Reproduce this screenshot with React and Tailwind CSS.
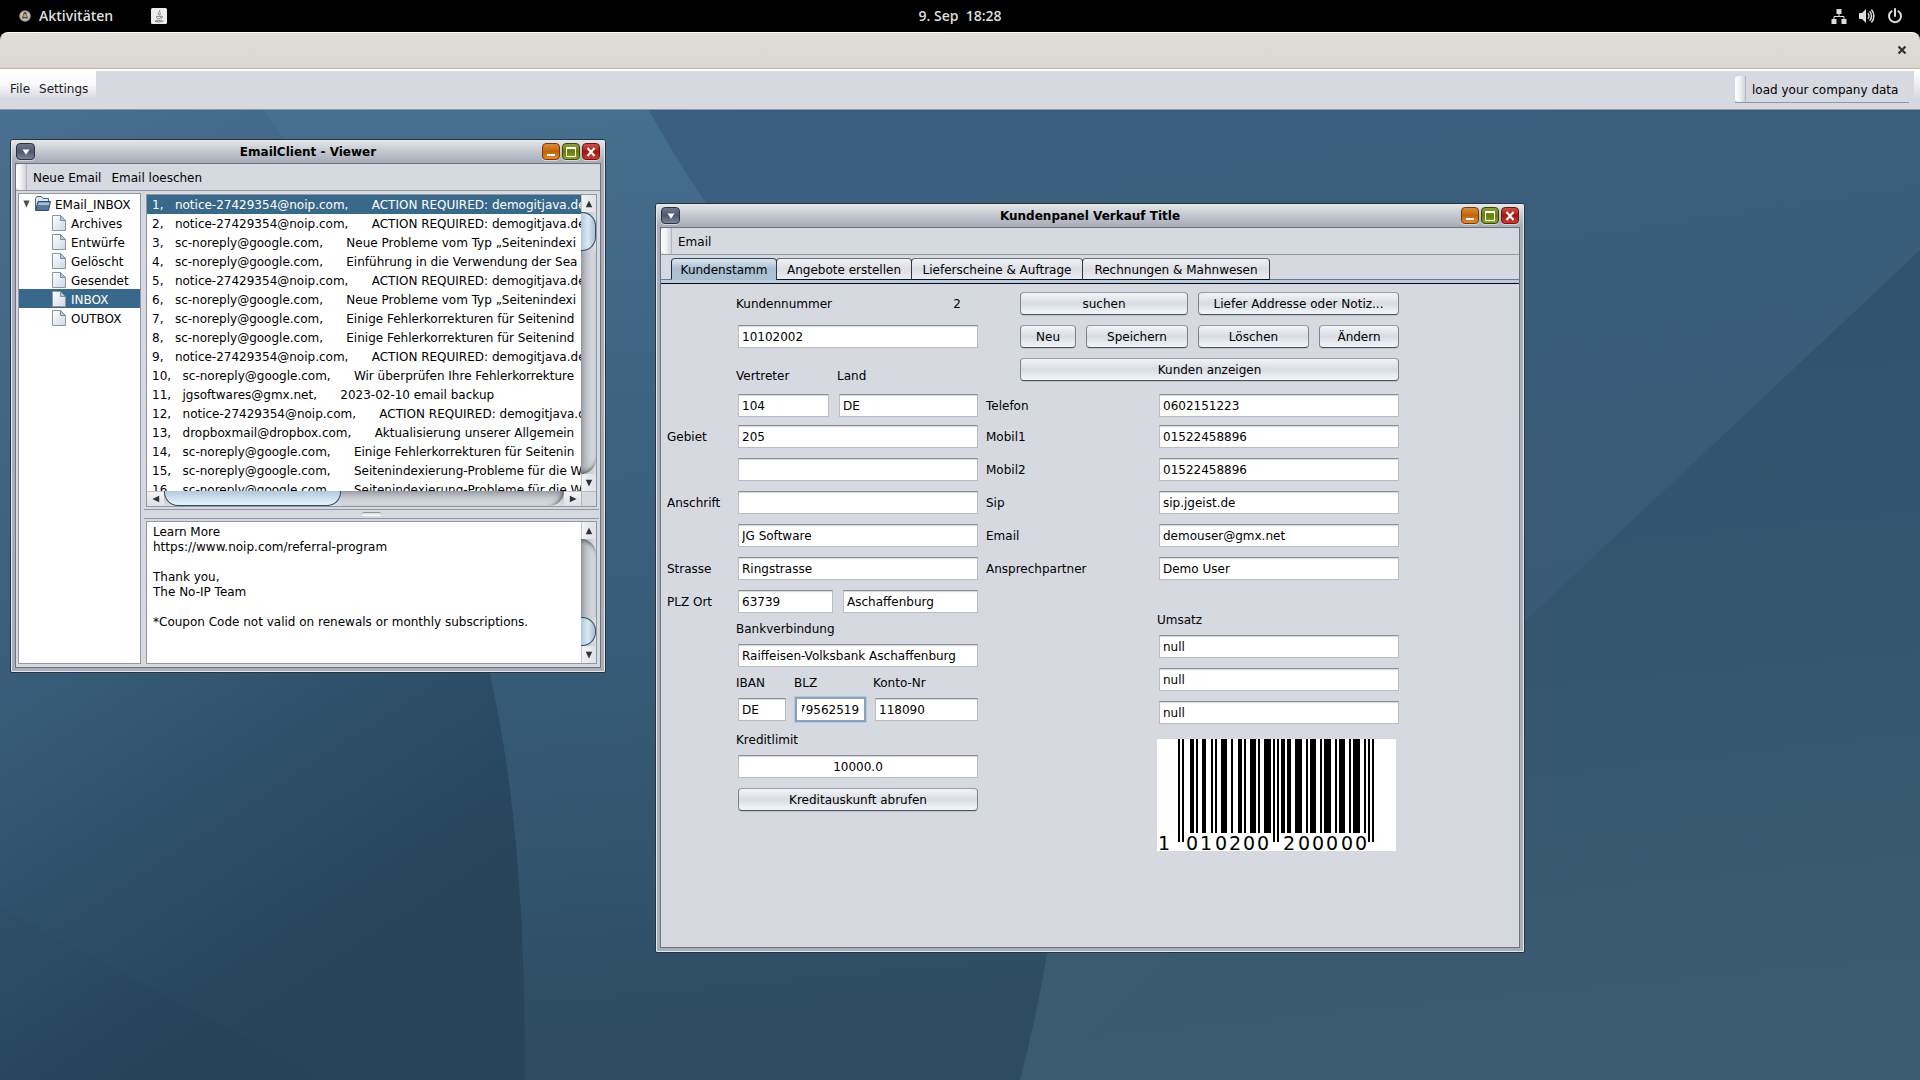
import { useEffect, useRef } from "react";

const SANS = "font-['DejaVu_Sans',sans-serif]";

/* ---------- wallpaper ---------- */

function Wallpaper() {
  return (
    <svg
      className="absolute inset-0 h-full w-full"
      viewBox="0 110 1920 970"
      preserveAspectRatio="none"
      aria-hidden="true"
    >
      <defs>
        <linearGradient id="wpRight" x1="0" y1="0" x2="0.3" y2="1">
          <stop offset="0" stopColor="#3c6083" />
          <stop offset="0.35" stopColor="#3a5d7a" />
          <stop offset="0.7" stopColor="#385a74" />
          <stop offset="1" stopColor="#3a5b71" />
        </linearGradient>
        <linearGradient id="wpMid" x1="0" y1="0" x2="0.1" y2="1">
          <stop offset="0" stopColor="#47708f" />
          <stop offset="0.5" stopColor="#3a5e7c" />
          <stop offset="0.8" stopColor="#33556e" />
          <stop offset="1" stopColor="#2d4c64" />
        </linearGradient>
        <linearGradient id="wpLeft" x1="0" y1="0" x2="0.35" y2="1">
          <stop offset="0" stopColor="#486f8f" />
          <stop offset="0.45" stopColor="#3c617e" />
          <stop offset="0.65" stopColor="#345670" />
          <stop offset="0.9" stopColor="#284760" />
          <stop offset="1" stopColor="#27445b" />
        </linearGradient>
        <linearGradient id="wpWedge" x1="0.8" y1="0" x2="0.9" y2="1">
          <stop offset="0" stopColor="#30526c" />
          <stop offset="0.5" stopColor="#33556e" stopOpacity="0.8" />
          <stop offset="1" stopColor="#38596f" stopOpacity="0" />
        </linearGradient>
      </defs>
      <rect x="0" y="110" width="1920" height="970" fill="url(#wpRight)" />
      <path d="M1920 250 L1524 622 L1200 926 L1040 1080 L1920 1080 Z" fill="url(#wpWedge)" />
      <path
        d="M0 110 H649 Q670 150 706 203 C960 500 1110 700 1047 954 Q1036 1020 1020 1080 H0 Z"
        fill="url(#wpMid)"
      />
      <path
        d="M0 110 H263 Q275 125 285 141 C380 330 450 510 490 675 Q526 830 525 1080 H0 Z"
        fill="url(#wpLeft)"
      />
      <path d="M0 908 L324 1080 H0 Z" fill="#1f3a50" opacity="0.06" />
    </svg>
  );
}

/* ---------- GNOME top bar ---------- */

function TopBar() {
  return (
    <header className="flex h-8 shrink-0 items-center bg-black font-['Open_Sans',sans-serif] text-sm font-semibold text-[#dedede]">
      <div className="grid w-full grid-cols-[1fr_auto_1fr] items-center">
        <div className="flex items-center gap-[38px] pl-[19px]">
          <button type="button" className="flex items-center gap-2">
            <svg viewBox="0 0 12 12" className="h-3 w-3" aria-hidden="true">
              <circle cx="6" cy="6" r="5.8" fill="#9b9b9b" />
              <circle cx="6" cy="6" r="4.6" fill="#c9c6c0" />
              <path d="M6 2 C4.4 2 4.2 3.2 4.3 4.6 C3.2 6 2.8 8 3.6 9.4 L8.4 9.4 C9.2 8 8.8 6 7.7 4.6 C7.8 3.2 7.6 2 6 2Z" fill="#4a4a4a" />
              <path d="M4.8 4.2 H7.2 L7.6 7 H4.4Z" fill="#e5a63c" />
              <path d="M3.6 8.4 H8.4 L8 9.8 H4Z" fill="#d8d8d8" />
            </svg>
            Aktivitäten
          </button>
          <button type="button" aria-label="Java" className="h-4 w-4">
            <svg viewBox="0 0 16 16" className="h-4 w-4" aria-hidden="true">
              <rect width="16" height="16" rx="1.5" fill="#ededed" />
              <path
                d="M8.8 2.2 C9.6 3.6 6.6 4.6 7.4 6.2 L8.4 7.4 M10 4.6 C8.4 5.4 9.4 6.4 8.8 7.4 M5.2 8.4 H10 C10.4 9.6 9.6 10.8 7.8 10.8 C6.4 10.8 5.6 10 5.4 9 M10.2 8.2 C12 7.8 12 9.8 10 10.2 M4.4 12.2 C6 12.8 9.6 12.8 11 12.2 M4 13.4 C6.4 14.2 10 14.2 12.4 13"
                fill="none"
                stroke="#777"
                strokeWidth="0.9"
              />
            </svg>
          </button>
        </div>
        <button type="button" className="whitespace-pre">9. Sep  18:28</button>
        <div className="flex items-center justify-end gap-3 pr-[17px]">
          <svg viewBox="0 0 16 16" className="h-4 w-4" aria-label="Netzwerk" role="img">
            <path d="M5.5 1h5v5h-5z M.5 11h5v5h-5z M10.500 11h5v5h-5z" fill="#dedede" />
            <path d="M8 6v2.500M3 11V8.500h10V11" fill="none" stroke="#dedede" />
          </svg>
          <svg viewBox="0 0 16 16" className="h-4 w-4" aria-label="Lautstärke" role="img">
            <path d="M0 5h3l4-4v14l-4-4H0z" fill="#dedede" />
            <path d="M8.800 5.200a4 4 0 0 1 0 5.600M10.600 3.200a7 7 0 0 1 0 9.600M12.400 1.400a10 10 0 0 1 0 13.200" fill="none" stroke="#dedede" strokeWidth="1.500" />
          </svg>
          <svg viewBox="0 0 16 16" className="h-4 w-4" aria-label="Ausschalten" role="img">
            <path d="M4.600 3.200a6 6 0 1 0 6.800 0M8 1v7" fill="none" stroke="#dedede" strokeWidth="2" strokeLinecap="round" />
          </svg>
        </div>
      </div>
    </header>
  );
}

/* ---------- application chrome ---------- */

function Grip() {
  return (
    <span className="w-[11px] self-stretch rounded-l-sm border-r border-[#b3b7c1] bg-linear-to-r from-white via-[#f1f2f3] to-[#d0d3d8]" />
  );
}

function AppHeader() {
  return (
    <>
      <div className="shrink-0 bg-black">
        <div className="flex h-[37px] items-center justify-end rounded-t-lg border-t border-b border-t-white border-b-[#bfb5ac] bg-linear-to-b from-[#e1ddda] to-[#dad6d1] pr-[13px] pb-px">
          <button type="button" aria-label="Schließen" className="h-[10px] w-[10px]">
            <svg viewBox="0 0 10 10" className="h-[10px] w-[10px]" aria-hidden="true">
              <path d="M1.500 1.500l7 7M8.500 1.500l-7 7" stroke="#2e3436" strokeWidth="2.200" />
            </svg>
          </button>
        </div>
      </div>
      <div className="flex h-[41px] shrink-0 items-start justify-between border-t-2 border-b border-t-white border-b-[#8f98a5] bg-[#d6d9e0] text-xs text-[#1c1c1c]">
        <nav className="flex h-[27px] w-24 items-end gap-[9px] bg-linear-to-b from-white via-[#f8f9fa] to-[#d8dbe2] pl-[10px]">
          <button type="button" className="h-[18px]">File</button>
          <button type="button" className="h-[18px]">Settings</button>
        </nav>
        <div className="flex">
          <div className="mt-[5px] flex h-[27px] items-center border-b border-[#9297a1]">
            <Grip />
            <button type="button" className="w-[163px] pt-px pl-[6px] text-left whitespace-nowrap text-black">load your company data</button>
          </div>
          <div className="ml-[5px] h-[27px] w-[6px] bg-linear-to-b from-white to-[#d8dbe2]" />
        </div>
      </div>
    </>
  );
}

/* ---------- internal frame ---------- */

function FrameButton({ tone, label, children }) {
  return (
    <button
      type="button"
      aria-label={label}
      className={`flex h-[17px] items-center justify-center rounded-[4px] border shadow-[0_1px_0_rgba(255,255,255,0.45)] ${tone}`}
    >
      {children}
    </button>
  );
}

function Frame({ title, place, menu, children }) {
  return (
    <section
      aria-label={title}
      className={`absolute flex flex-col rounded-t-[3px] rounded-b-[2px] border border-[#27333e] bg-[#a9aeb9] shadow-[inset_0_0_0_1px_#e4e6e9] ${place}`}
    >
      <header className="grid h-[23px] shrink-0 grid-cols-[1fr_auto_1fr] items-center rounded-t-[2px] border-x border-[#e4e6e9] bg-linear-to-b from-[#e6e7e9] via-[#c3c7cf] to-[#a6abb6] px-1">
        <FrameButton label="Menü" tone="w-[19px] border-[#2b3242] bg-linear-to-b from-[#70788b] via-[#4f586d] to-[#7b849a]">
          <svg viewBox="0 0 8 6" className="h-[6px] w-2" aria-hidden="true">
            <path d="M0.500 0.500h7L4 5.800z" fill="#fff" />
          </svg>
        </FrameButton>
        <h2 className="text-xs font-bold text-black">{title}</h2>
        <div className="flex justify-end gap-[2px]">
          <FrameButton label="Minimieren" tone="w-[18px] border-[#7f3608] bg-linear-to-b from-[#d58c3c] via-[#c06405] to-[#e08a2a]">
            <svg viewBox="0 0 12 12" className="h-3 w-3" aria-hidden="true">
              <rect x="2" y="8" width="8" height="2" fill="#fff" />
            </svg>
          </FrameButton>
          <FrameButton label="Maximieren" tone="w-[18px] border-[#3a4a06] bg-linear-to-b from-[#8c9f3e] via-[#667c06] to-[#8da52c]">
            <svg viewBox="0 0 12 12" className="h-3 w-3" aria-hidden="true">
              <path d="M1.500 2.500h9v8h-9z" fill="none" stroke="#fff" />
              <path d="M1 1h10v2H1z" fill="#fff" />
            </svg>
          </FrameButton>
          <FrameButton label="Schließen" tone="w-[18px] border-[#6e1212] bg-linear-to-b from-[#c5514a] via-[#a6160f] to-[#cb3a32]">
            <svg viewBox="0 0 12 12" className="h-3 w-3" aria-hidden="true">
              <path d="M2.500 2l7 8M9.500 2l-7 8" stroke="#fff" strokeWidth="2" />
            </svg>
          </FrameButton>
        </div>
      </header>
      <div className="mx-1 mb-1 flex min-h-0 flex-1 flex-col border border-[#6b7383] bg-[#d6d9e0] text-xs text-black">
        <nav className="flex h-[27px] shrink-0 items-center border-b border-[#9297a5]">
          <Grip />
          <div className="flex gap-[10px] pt-[2px] pl-[6px]">
            {menu.map((m) => (
              <button key={m} type="button" className="whitespace-nowrap">{m}</button>
            ))}
          </div>
        </nav>
        {children}
      </div>
    </section>
  );
}

/* ---------- scroll bars ---------- */

function Arrow({ dir }) {
  const d = {
    up: "M5 0.500L9 9H1z",
    down: "M1 1h8L5 9.500z",
    left: "M0.500 5L9 1v8z",
    right: "M1 1l8.500 4L1 9z",
  }[dir];
  return (
    <svg viewBox="0 0 10 10" className="h-2 w-2" aria-hidden="true">
      <path d={d} fill="#2f3237" />
    </svg>
  );
}

function VScroll({ before, thumb }) {
  return (
    <div className="flex w-[15px] shrink-0 flex-col bg-linear-to-r from-[#9ea1a8] via-[#c8cbd2] to-[#dcdee4]">
      <button type="button" aria-label="Nach oben" className="flex h-[17px] shrink-0 items-center justify-center border-l border-[#c3c6cc] bg-linear-to-r from-[#f2f3f4] to-[#dfe1e6]">
        <Arrow dir="up" />
      </button>
      <div className={`shrink-0 rounded-tr-[15px] shadow-[inset_0_4px_4px_-2px_#5b5e64] ${before}`} />
      <div className={`shrink-0 rounded-r-[14px] border border-l-0 border-[#344d65] bg-linear-to-r from-[#b2c6dc] via-[#dbe9f4] to-[#a9bfd2] ${thumb}`} />
      <div className="flex-1 rounded-br-[15px] shadow-[inset_0_-4px_4px_-2px_#5b5e64]" />
      <button type="button" aria-label="Nach unten" className="flex h-[17px] shrink-0 items-center justify-center border-l border-[#c3c6cc] bg-linear-to-r from-[#f2f3f4] to-[#dfe1e6]">
        <Arrow dir="down" />
      </button>
    </div>
  );
}

function HScroll() {
  return (
    <div className="flex h-[15px] shrink-0">
      <div className="flex min-w-0 flex-1 bg-linear-to-b from-[#9ea1a8] via-[#c8cbd2] to-[#dcdee4]">
        <button type="button" aria-label="Nach links" className="flex w-[17px] items-center justify-center border-t border-[#c3c6cc] bg-linear-to-b from-[#f2f3f4] to-[#dfe1e6]">
          <Arrow dir="left" />
        </button>
        <div className="w-[177px] rounded-b-[14px] border border-t-0 border-[#344d65] bg-linear-to-b from-[#b2c6dc] via-[#cfdfec] to-[#e6f4fd]" />
        <div className="flex-1 rounded-br-[15px] shadow-[inset_-4px_0_4px_-2px_#5b5e64]" />
        <button type="button" aria-label="Nach rechts" className="flex w-[17px] items-center justify-center border-t border-[#c3c6cc] bg-linear-to-b from-[#f2f3f4] to-[#dfe1e6]">
          <Arrow dir="right" />
        </button>
      </div>
      <div className="w-[15px] border-t border-l border-[#b4b8c0]" />
    </div>
  );
}

/* ---------- e-mail client ---------- */

const FOLDERS = ["Archives", "Entwürfe", "Gelöscht", "Gesendet", "INBOX", "OUTBOX"];

const NOIP = "notice-27429354@noip.com";
const GOOGLE = "sc-noreply@google.com";
const MAILS = [
  [NOIP, "ACTION REQUIRED: demogitjava.de"],
  [NOIP, "ACTION REQUIRED: demogitjava.de"],
  [GOOGLE, "Neue Probleme vom Typ „Seitenindexi"],
  [GOOGLE, "Einführung in die Verwendung der Sea"],
  [NOIP, "ACTION REQUIRED: demogitjava.de"],
  [GOOGLE, "Neue Probleme vom Typ „Seitenindexi"],
  [GOOGLE, "Einige Fehlerkorrekturen für Seitenind"],
  [GOOGLE, "Einige Fehlerkorrekturen für Seitenind"],
  [NOIP, "ACTION REQUIRED: demogitjava.de"],
  [GOOGLE, "Wir überprüfen Ihre Fehlerkorrekture"],
  ["jgsoftwares@gmx.net", "2023-02-10 email backup"],
  [NOIP, "ACTION REQUIRED: demogitjava.de"],
  ["dropboxmail@dropbox.com", "Aktualisierung unserer Allgemein"],
  [GOOGLE, "Einige Fehlerkorrekturen für Seitenin"],
  [GOOGLE, "Seitenindexierung-Probleme für die W"],
  [GOOGLE, "Seitenindexierung-Probleme für die W"],
];

const MESSAGE = `Learn More
https://www.noip.com/referral-program

Thank you,
The No-IP Team

*Coupon Code not valid on renewals or monthly subscriptions.`;

function FileIcon() {
  return (
    <svg viewBox="0 0 14 16" className="h-4 w-[14px]" aria-hidden="true">
      <defs>
        <linearGradient id="sheet" x1="0" y1="0" x2="1" y2="1">
          <stop offset="0" stopColor="#fff" />
          <stop offset="1" stopColor="#cfd9e6" />
        </linearGradient>
      </defs>
      <path d="M.5.5h8l5 5v10H.5z" fill="url(#sheet)" stroke="#8d95a1" />
      <path d="M8.500.5v5h5z" fill="#b4cadf" stroke="#7c8ca0" strokeLinejoin="round" />
    </svg>
  );
}

function FolderIcon() {
  return (
    <svg viewBox="0 0 16 15" className="h-[15px] w-4" aria-hidden="true">
      <path d="M.5 14V2.500L2 .5h4.500L8 2.500h5.500V6" fill="#dce6ef" stroke="#49627d" />
      <path d="M.7 14.500L3 5.500h12.500L13.500 14.500z" fill="#56799a" stroke="#304c68" />
      <path d="M3.600 6.500h10.800l-.5 2.500H3z" fill="#a9c1d6" />
    </svg>
  );
}

function EmailWindow() {
  return (
    <Frame title="EmailClient - Viewer" place="left-[10px] top-[29px] h-[534px] w-[596px]" menu={["Neue Email", "Email loeschen"]}>
      <div className="flex min-h-0 flex-1">
        <div className="mt-[2px] mb-[3px] ml-[2px] w-[123px] shrink-0 border border-[#9297a1] bg-white">
          <button type="button" className="flex h-[19px] w-full items-center pl-1">
            <svg viewBox="0 0 8 8" className="h-2 w-[7px]" aria-hidden="true">
              <path d="M0.500 0h7L4 8z" fill="#4c4f54" />
            </svg>
            <span className="pl-[5px]"><FolderIcon /></span>
            <span className="pt-[2px] pl-1">EMail_INBOX</span>
          </button>
          <ul>
            {FOLDERS.map((f) => (
              <li key={f}>
                <button
                  type="button"
                  className={`flex h-[19px] w-full items-center gap-[5px] pl-[33px] ${f === "INBOX" ? "bg-[#39698a] text-white" : ""}`}
                >
                  <FileIcon />
                  <span className="pt-[2px]">{f}</span>
                </button>
              </li>
            ))}
          </ul>
        </div>
        <div className="flex min-w-0 flex-1 flex-col pr-px pl-[3px]">
          <div className="mx-[2px] mt-[3px] flex h-[313px] flex-col border border-[#9297a1]">
            <div className="flex min-h-0 flex-1">
              <ul className="min-w-0 flex-1 overflow-hidden bg-white">
                {MAILS.map(([from, subject], i) => (
                  <li key={i}>
                    <button
                      type="button"
                      className={`flex h-[19px] w-full gap-2 pl-[5px] text-left leading-[21px] whitespace-pre ${i === 0 ? "bg-[#39698a] text-white" : ""}`}
                    >
                      <span>{`${i + 1},   ${from},    `}</span>
                      <span>{subject}</span>
                    </button>
                  </li>
                ))}
              </ul>
              <VScroll before="h-0" thumb="h-[39px]" />
            </div>
            <HScroll />
          </div>
          <div className="mt-[2px] flex h-[10px] items-center justify-center border-y border-[#9297a5]">
            <span className="h-1 w-[19px] rounded-xs border-t border-b border-t-[#8d92a3] border-b-white bg-[#e6e8ee]" />
          </div>
          <div className="mx-[2px] mt-[2px] mb-[3px] flex min-h-0 flex-1 border border-[#9297a1]">
            <textarea
              aria-label="Nachricht"
              readOnly
              value={MESSAGE}
              className="min-w-0 flex-1 resize-none overflow-hidden bg-white px-[6px] py-[3px] leading-[15px] outline-none"
            />
            <VScroll before="h-[78px]" thumb="h-[29px]" />
          </div>
        </div>
      </div>
    </Frame>
  );
}

/* ---------- barcode ---------- */

const L_CODES = ["0001101", "0011001", "0010011", "0111101", "0100011", "0110001", "0101111", "0111011", "0110111", "0001011"];
const flip = (s) => s.replace(/[01]/g, (c) => (c === "0" ? "1" : "0"));
const rCode = (n) => flip(L_CODES[n]);
const gCode = (n) => rCode(n).split("").reverse().join("");
const PARITY = "LLGLGG";

function encode(code) {
  const digits = code.split("").map(Number);
  const left = digits.slice(1, 7).map((n, i) => (PARITY[i] === "L" ? L_CODES[n] : gCode(n))).join("");
  const right = digits.slice(7).map(rCode).join("");
  return `101${left}01010${right}101`;
}

function Barcode({ code }) {
  const bits = encode(code);
  const guard = (i) => i < 3 || (i >= 45 && i < 50) || i >= 92;
  const edge = (i) => 21 + Math.floor(i * 2.07);
  const digitX = [7, 35, 49, 64, 78, 92, 106, 132, 147, 161, 175, 190, 204];
  return (
    <svg viewBox="0 0 239 112" className="block h-28 w-[239px]" role="img" aria-label={`Barcode ${code}`}>
      <rect width="239" height="112" fill="#fff" />
      {bits.split("").map((b, i) =>
        b === "1" ? <rect key={i} x={edge(i)} width={edge(i + 1) - edge(i)} height={guard(i) ? 103 : 94} fill="#000" /> : null
      )}
      {code.split("").map((c, i) => (
        <text key={i} x={digitX[i]} y="111" fontSize="19" textAnchor="middle" fill="#000">{c}</text>
      ))}
    </svg>
  );
}

/* ---------- customer panel ---------- */

const FIELD =
  "h-[23px] min-w-0 border border-[#bcbdbf] border-t-[#8d8e91] bg-white px-[3px] text-xs text-black shadow-[inset_0_2px_1px_-1px_#d5d6d8] outline-none";

function Field({ label, value, className = "w-full", id }) {
  return <input id={id} aria-label={id ? undefined : label} defaultValue={value} className={`${FIELD} ${className}`} />;
}

function BlzField() {
  const ref = useRef(null);
  useEffect(() => {
    ref.current.scrollLeft = ref.current.scrollWidth;
  }, []);
  return (
    <input
      id="blz"
      ref={ref}
      defaultValue="79562519"
      className="h-[23px] w-[69px] border border-[#9aa0a8] bg-white pr-[5px] pl-[5px] text-xs text-black shadow-[0_0_0_1px_#7ba5d0,0_0_0_2px_#b3c9e1] outline-none"
    />
  );
}

function Push({ children, className = "" }) {
  return (
    <button
      type="button"
      className={`flex h-[23px] items-center justify-center rounded-[4px] border border-[#7d8189] border-t-[#989ca4] border-b-[#4e535b] bg-linear-to-b from-[#f3f4f6] via-[#d9dce3] to-[#f3f7fc] text-xs whitespace-nowrap text-black shadow-[0_1px_0_#bfc3cb] ${className}`}
    >
      {children}
    </button>
  );
}

function LeftRow({ label, id, className, children }) {
  return (
    <div className={`flex h-[23px] items-center ${className}`}>
      {label ? <label htmlFor={id} className="w-[71px] shrink-0">{label}</label> : <span className="w-[71px] shrink-0" />}
      {children}
    </div>
  );
}

function RightRow({ label, id, value, className }) {
  return (
    <div className={`flex h-[23px] items-center ${className}`}>
      <label htmlFor={id} className="flex-1">{label}</label>
      <Field id={id} value={value} className="w-[240px]" />
    </div>
  );
}

const TABS = [
  ["Kundenstamm", "w-[106px]"],
  ["Angebote erstellen", "w-[136px]"],
  ["Lieferscheine & Auftrage", "w-[172px]"],
  ["Rechnungen & Mahnwesen", "w-[188px]"],
];

function TabStrip() {
  return (
    <div className="shrink-0 pt-[3px]">
      <div role="tablist" className="flex border-b border-[#6d7a90] pl-[10px]">
        {TABS.map(([t, w], i) => (
          <button
            key={t}
            type="button"
            role="tab"
            aria-selected={i === 0}
            className={`-mb-px h-[22px] rounded-t-[4px] border pt-[2px] whitespace-nowrap ${w} ${
              i === 0
                ? "border-x-[#1c2c40] border-t-[#2c4560] border-b-[#a9bfd4] bg-linear-to-b from-[#dce6ee] via-[#a9bfd2] to-[#abc1d6]"
                : "-ml-px border-[#33383f] border-t-[#6b7078] border-b-[#0e1118] bg-linear-to-b from-[#f1f2f5] via-[#dcdee4] to-[#eceef2]"
            }`}
          >
            {t}
          </button>
        ))}
      </div>
      <div className="h-1 border-b border-[#05070f] bg-[#b9cbdf]" />
    </div>
  );
}

function CustomerWindow() {
  return (
    <Frame title="Kundenpanel Verkauf Title" place="left-[655px] top-[93px] h-[750px] w-[870px]" menu={["Email"]}>
      <TabStrip />
      <form className="flex flex-1 gap-2 pt-2 pl-[6px]">
        <div className="w-[311px] shrink-0">
          <div className="flex h-[23px] items-center justify-between pr-[17px] pl-[69px]">
            <label htmlFor="kdnr">Kundennummer</label>
            <span>2</span>
          </div>
          <LeftRow className="mt-[10px]"><Field id="kdnr" value="10102002" /></LeftRow>
          <div className="mt-5 flex h-4 items-center pl-[69px]">
            <label htmlFor="vertreter" className="w-[101px]">Vertreter</label>
            <label htmlFor="land">Land</label>
          </div>
          <LeftRow className="mt-[10px]">
            <Field id="vertreter" value="104" className="mr-[10px] w-[91px]" />
            <Field id="land" value="DE" className="flex-1" />
          </LeftRow>
          <LeftRow label="Gebiet" id="gebiet" className="mt-2"><Field id="gebiet" value="205" /></LeftRow>
          <LeftRow className="mt-[10px]"><Field label="Gebiet Zusatz" value="" /></LeftRow>
          <LeftRow label="Anschrift" id="anschrift" className="mt-[10px]"><Field id="anschrift" value="" /></LeftRow>
          <LeftRow className="mt-[10px]"><Field label="Name" value="JG Software" /></LeftRow>
          <LeftRow label="Strasse" id="strasse" className="mt-[10px]"><Field id="strasse" value="Ringstrasse" /></LeftRow>
          <LeftRow label="PLZ Ort" id="plz" className="mt-[10px]">
            <Field id="plz" value="63739" className="mr-[10px] w-[95px]" />
            <Field label="Ort" value="Aschaffenburg" className="flex-1" />
          </LeftRow>
          <div className="mt-2 flex h-4 items-center pl-[69px]"><label htmlFor="bank">Bankverbindung</label></div>
          <LeftRow className="mt-[7px]"><Field id="bank" value="Raiffeisen-Volksbank Aschaffenburg" /></LeftRow>
          <div className="mt-2 flex h-4 items-center pl-[69px]">
            <label htmlFor="iban" className="w-[58px]">IBAN</label>
            <label htmlFor="blz" className="w-[79px]">BLZ</label>
            <label htmlFor="konto">Konto-Nr</label>
          </div>
          <LeftRow className="mt-[7px]">
            <Field id="iban" value="DE" className="mr-[10px] w-12" />
            <BlzField />
            <Field id="konto" value="118090" className="ml-[10px] flex-1" />
          </LeftRow>
          <div className="mt-[11px] flex h-4 items-center pl-[69px]"><label htmlFor="limit">Kreditlimit</label></div>
          <LeftRow className="mt-[7px]"><Field id="limit" value="10000.0" className="w-full text-center" /></LeftRow>
          <div className="mt-[10px] pl-[71px]"><Push className="w-full">Kreditauskunft abrufen</Push></div>
        </div>
        <div className="w-[413px] shrink-0">
          <div className="flex flex-col gap-[10px] pl-[34px]">
            <div className="flex gap-[10px]">
              <Push className="w-[168px]">suchen</Push>
              <Push className="flex-1">Liefer Addresse oder Notiz...</Push>
            </div>
            <div className="flex gap-[10px]">
              <Push className="w-14">Neu</Push>
              <Push className="w-[102px]">Speichern</Push>
              <Push className="flex-1">Löschen</Push>
              <Push className="w-20">Ändern</Push>
            </div>
            <Push className="w-full">Kunden anzeigen</Push>
          </div>
          <RightRow label="Telefon" id="tel" value="0602151223" className="mt-[13px]" />
          <RightRow label="Mobil1" id="mobil1" value="01522458896" className="mt-2" />
          <RightRow label="Mobil2" id="mobil2" value="01522458896" className="mt-[10px]" />
          <RightRow label="Sip" id="sip" value="sip.jgeist.de" className="mt-[10px]" />
          <RightRow label="Email" id="email" value="demouser@gmx.net" className="mt-[10px]" />
          <RightRow label="Ansprechpartner" id="partner" value="Demo User" className="mt-[10px]" />
          <div className="mt-8 flex h-4 items-center pl-[171px]"><label htmlFor="umsatz1">Umsatz</label></div>
          <div className="mt-[7px] flex flex-col gap-[10px] pl-[173px]">
            <Field id="umsatz1" value="null" />
            <Field label="Umsatz 2" value="null" />
            <Field label="Umsatz 3" value="null" />
          </div>
          <div className="mt-[15px] pl-[171px]"><Barcode code="1010200200000" /></div>
        </div>
      </form>
    </Frame>
  );
}

export default function App() {
  return (
    <div className={`flex min-h-screen flex-col overflow-hidden bg-black ${SANS}`}>
      <TopBar />
      <AppHeader />
      <main className="relative flex-1 overflow-hidden">
        <Wallpaper />
        <EmailWindow />
        <CustomerWindow />
      </main>
    </div>
  );
}
